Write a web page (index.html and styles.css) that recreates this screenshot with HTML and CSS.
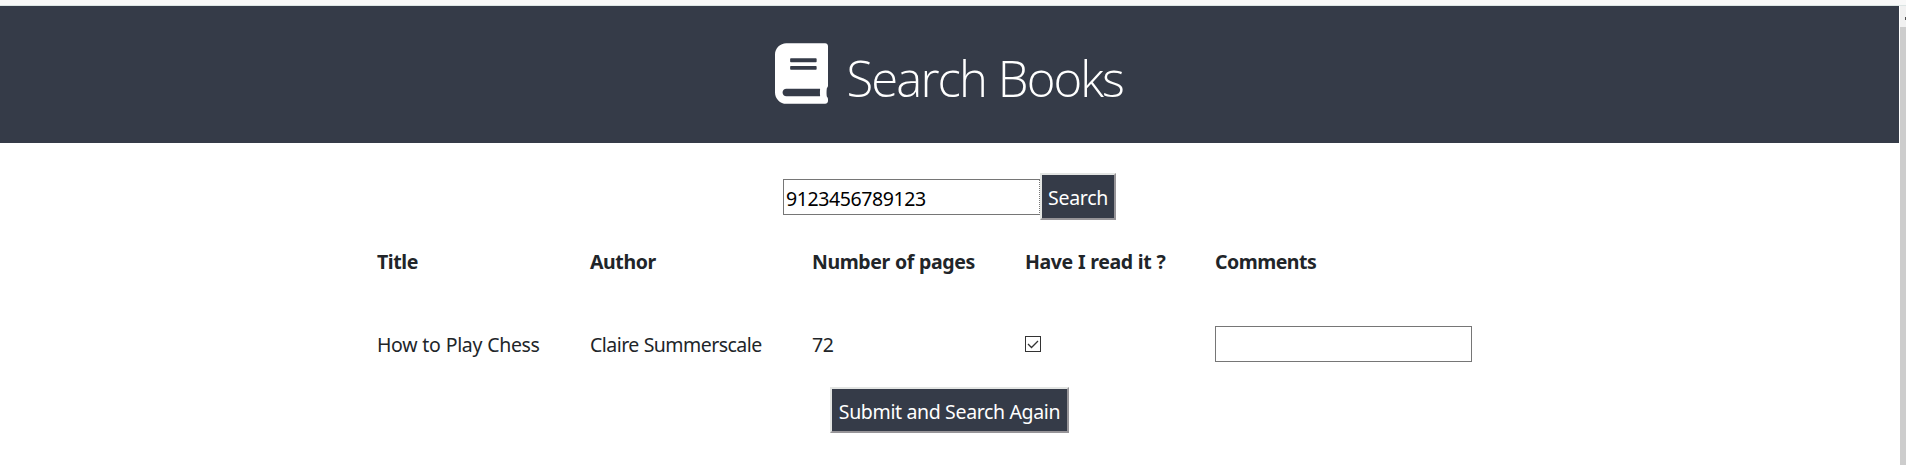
FILE: index.html
```html
<!DOCTYPE html>
<html lang="en">
<head>
<meta charset="utf-8">
<title>Search Books</title>
<link rel="stylesheet" href="styles.css">
</head>
<body>
<div class="chrome"></div>
<div class="viewport">
  <div class="page">
    <header class="banner">
      <svg class="book" viewBox="0 0 448 512" aria-hidden="true"><path d="M448 360V24c0-13.300-10.700-24-24-24H96C43 0 0 43 0 96v320c0 53 43 96 96 96h328c13.300 0 24-10.700 24-24v-16c0-7.500-3.500-14.300-8.900-18.700-4.200-15.400-4.200-59.300 0-74.700 5.400-4.300 8.900-11.100 8.900-18.600zM128 134c0-3.300 2.700-6 6-6h212c3.300 0 6 2.700 6 6v20c0 3.300-2.700 6-6 6H134c-3.300 0-6-2.700-6-6v-20zm0 64c0-3.300 2.700-6 6-6h212c3.300 0 6 2.700 6 6v20c0 3.300-2.700 6-6 6H134c-3.300 0-6-2.700-6-6v-20zm253.400 250H96c-17.700 0-32-14.300-32-32 0-17.600 14.400-32 32-32h285.400c-1.900 17.100-1.900 46.900 0 64z"/></svg>
      <h1 class="title">Search Books</h1>
    </header>
    <form class="search">
      <input class="field query" type="text" value="9123456789123" aria-label="ISBN">
      <button class="btn find" type="button">Search</button>
    </form>
    <div class="books">
      <div class="head">Title</div>
      <div class="head author">Author</div>
      <div class="head pages">Number of pages</div>
      <div class="head read">Have I read it ?</div>
      <div class="head comments">Comments</div>
      <div class="cell">How to Play Chess</div>
      <div class="cell name">Claire Summerscale</div>
      <div class="cell">72</div>
      <div class="cell"><svg class="check" viewBox="0 0 16 16" role="img" aria-label="Read"><rect x=".5" y=".5" width="15" height="15"/><path d="M3 8l3.500 3.500L13 5"/></svg></div>
      <div class="cell note"><input class="field" type="text" aria-label="Comments"></div>
    </div>
    <div class="actions"><button class="btn submit" type="button">Submit and Search Again</button></div>
  </div>
  <div class="scrollbar"><div class="arrow"></div><div class="thumb"></div></div>
</div>
</body>
</html>
```
FILE: styles.css
```css
* { box-sizing: border-box; }
body {
  margin: 0;
  height: 465px;
  overflow: hidden;
  background: #fff;
  color: #212529;
  font: 19.5px/30px "Noto Sans", "Open Sans", sans-serif;
}
.chrome { height: 6px; background: #f8f8f8; border-bottom: 1px solid #dce5e4; }
.viewport { display: flex; height: 459px; }
.page { width: 1899px; }
.banner {
  display: flex;
  justify-content: center;
  height: 137px;
  padding: 37px 1px 0 0;
  gap: 19px;
  background: #353b48;
  color: #fff;
}
.book { width: 53px; height: 61px; fill: #fff; }
.title {
  width: 277px;
  margin: 0;
  font: 300 49px/71px "Open Sans", "Noto Sans", sans-serif;
  letter-spacing: -1.9px;
  word-spacing: 1px;
  white-space: nowrap;
}
.search { display: flex; align-items: center; height: 47px; margin: 30px 0 0 783px; }
.field {
  width: 257px;
  height: 36px;
  padding: 3px 2px 0;
  border: 1px solid #767676;
  background: #fff;
  color: #000;
  font: inherit;
}
.query { letter-spacing: -0.4px; border-right-style: dotted; }
.btn {
  padding: 3px 0 0;
  border: 2px solid;
  border-color: #e3e5e3 #969498 #969498 #e3e5e3;
  border-radius: 0;
  background: #353b48;
  color: #fff;
  font: inherit;
  white-space: nowrap;
}
.find { width: 76px; height: 47px; letter-spacing: -0.3px; }
.books {
  display: grid;
  grid-template-columns: 213px 222px 213px 190px 257px;
  grid-template-rows: 82px 84px;
  margin-left: 377px;
}
.head { padding-top: 27px; font-weight: 700; letter-spacing: -0.4px; word-spacing: 0.5px; white-space: nowrap; }
.comments { letter-spacing: -0.5px; }
.cell { display: flex; align-items: center; padding-top: 1px; letter-spacing: -0.35px; word-spacing: 0.5px; white-space: nowrap; }
.name { letter-spacing: -0.55px; }
.note { padding: 0 0 1px; }
.check { width: 16px; height: 16px; margin-bottom: 2px; fill: none; stroke: #333; stroke-width: 1; }
.check path { stroke-width: 1.300; }
.actions { display: flex; justify-content: center; padding-top: 1px; }
.submit { width: 239px; height: 46px; letter-spacing: -0.35px; }
.scrollbar { width: 7px; padding-left: 1px; background: linear-gradient(90deg, #fff 1px, #f1f1f1 1px); }
.arrow { width: 1px; height: 3px; margin: 11px 0 7px 5px; background: #505050; }
.thumb { height: 438px; background: #cdcdcd; }
```
